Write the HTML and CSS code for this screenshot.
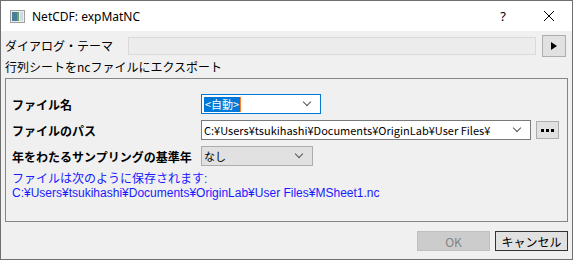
FILE: index.html
```html
<!DOCTYPE html>
<html lang="ja">
<head>
    <meta charset="UTF-8">
    <title>NetCDF: expMatNC</title>
    <link rel="stylesheet" href="styles.css">
</head>
<body>

<div class="window">
    <div class="titlebar">
        <svg class="app-icon" width="15" height="13" viewBox="0 0 15 13">
            <rect x="0.5" y="0.5" width="14" height="12" fill="#eeeeee" stroke="#a0a0a0"/>
            <rect x="2" y="2" width="5" height="9" fill="#4a7f9c"/>
            <rect x="7" y="2" width="2" height="9" fill="#6aa36a"/>
            <rect x="10" y="2" width="3" height="9" fill="#d3dbe2"/>
        </svg>
        <span class="title">NetCDF: expMatNC</span>
        <span class="title-btn help">?</span>
        <span class="title-btn close">
            <svg width="12" height="12" viewBox="0 0 12 12">
                <path d="M1 1 L11 11 M11 1 L1 11" stroke="#000" stroke-width="1"/>
            </svg>
        </span>
    </div>

    <div class="content">
        <div class="theme-row">
            <span class="theme-label">ダイアログ・テーマ</span>
            <div class="theme-field"></div>
            <div class="theme-btn">
                <svg width="6" height="8" viewBox="0 0 6 8"><path d="M0 0 L6 4 L0 8 Z" fill="#000"/></svg>
            </div>
        </div>

        <div class="caption">行列シートをncファイルにエクスポート</div>

        <div class="group">
            <div class="form">
                <label>ファイル名</label>
                <div class="combo combo-name focused">
                    <span class="value"><span class="sel">&lt;自動&gt;</span><span class="caret"></span></span>
                    <span class="arrow"></span>
                </div>
                <span></span>

                <label>ファイルのパス</label>
                <div class="combo combo-path">
                    <span class="value">C:¥Users¥tsukihashi¥Documents¥OriginLab¥User Files¥</span>
                    <span class="arrow"></span>
                </div>
                <div class="dots-btn">
                    <svg width="14" height="3" viewBox="0 0 14 3"><rect x="0" y="0" width="3" height="3"/><rect x="5" y="0" width="3" height="3"/><rect x="10" y="0" width="3" height="3"/></svg>
                </div>

                <label>年をわたるサンプリングの基準年</label>
                <div class="combo combo-year dropdown">
                    <span class="value">なし</span>
                    <span class="arrow"></span>
                </div>
                <span></span>
            </div>

            <div class="save-note">
                <div>ファイルは次のように保存されます:</div>
                <div>C:¥Users¥tsukihashi¥Documents¥OriginLab¥User Files¥MSheet1.nc</div>
            </div>
        </div>

        <div class="buttons">
            <button class="btn" disabled>OK</button>
            <button class="btn default">キャンセル</button>
        </div>
    </div>
</div>

</body>
</html>
```

FILE: styles.css
```css
body {
    margin: 0;
    padding: 0;
    background: #f0f0f0;
    font-family: "Noto Sans CJK JP", "Noto Sans", sans-serif;
    font-size: 12px;
    color: #000;
}

.window {
    width: 573px;
    height: 260px;
    box-sizing: border-box;
    border: 1px solid #6f6f6f;
    background: #f0f0f0;
    overflow: hidden;
}

.titlebar {
    height: 30px;
    background: #fff;
    display: flex;
    align-items: center;
}

.app-icon {
    margin-left: 9px;
    margin-right: 7px;
    margin-top: 1px;
}

.title {
    font-family: "Noto Sans", sans-serif;
    font-size: 12px;
    flex: 1;
}

.title-btn {
    width: 46px;
    text-align: center;
    font-family: "Noto Sans", sans-serif;
    font-size: 13px;
}

.close {
    display: flex;
    justify-content: center;
    align-items: center;
}

.content {
    padding: 3px 4px 0 4px;
}

.theme-row {
    display: flex;
    align-items: center;
    height: 23px;
}

.theme-label {
    width: 123px;
}

.theme-field {
    width: 406px;
    height: 16px;
    border: 1px solid #dadada;
    background: #ececec;
}

.theme-btn {
    width: 22px;
    height: 20px;
    margin-left: 6px;
    border: 1px solid #adadad;
    background: #e1e1e1;
    display: flex;
    justify-content: center;
    align-items: center;
}

.caption {
    height: 19px;
    line-height: 19px;
}

.group {
    height: 144px;
    box-sizing: border-box;
    border: 1px solid #858585;
    margin-top: 2px;
    padding: 15px 6px 0 6px;
}

.form {
    display: grid;
    grid-template-columns: 189px max-content max-content;
    row-gap: 6px;
    align-items: center;
}

.form label {
    font-weight: bold;
    font-size: 12px;
}

.combo {
    height: 20px;
    box-sizing: border-box;
    border: 1px solid #7a7a7a;
    background: #fff;
    display: flex;
    align-items: center;
    padding-left: 2px;
}

.combo .value {
    flex: 1;
    white-space: nowrap;
    overflow: hidden;
    font-size: 11px;
    display: flex;
    align-items: center;
}

.combo .arrow {
    width: 5px;
    height: 5px;
    border-right: 1px solid #555;
    border-bottom: 1px solid #555;
    transform: rotate(45deg);
    margin: 0 10px 4px 6px;
}

.combo-name {
    width: 120px;
}

.combo-path {
    width: 330px;
}

.combo-year {
    width: 112px;
}

.focused {
    border-color: #0078d7;
}

.sel {
    background: #0078d7;
    color: #fff;
    line-height: 15px;
    padding: 0 1px;
}

.caret {
    width: 1px;
    height: 15px;
    background: #ff7f27;
}

.dropdown {
    background: #e1e1e1;
    border-color: #adadad;
}

.dots-btn {
    width: 23px;
    height: 18px;
    margin-left: 5px;
    box-sizing: border-box;
    border: 1px solid #adadad;
    background: #e1e1e1;
    display: flex;
    justify-content: center;
    align-items: center;
}

.save-note {
    color: #1a1aff;
    margin-top: 6px;
    line-height: 14px;
    font-family: "Liberation Sans", "Noto Sans CJK JP", sans-serif;
    font-size: 12px;
}

.buttons {
    display: flex;
    justify-content: flex-end;
    gap: 5px;
    margin-top: 9px;
}

.btn {
    width: 73px;
    height: 20px;
    font-family: "Noto Sans CJK JP", sans-serif;
    font-size: 12px;
    border: 1px solid #adadad;
    background: #e1e1e1;
    padding: 0;
    color: #000;
}

.btn:disabled {
    background: #cccccc;
    border-color: #bfbfbf;
    color: #838383;
}

.btn.default {
    border-color: #333;
}
```
